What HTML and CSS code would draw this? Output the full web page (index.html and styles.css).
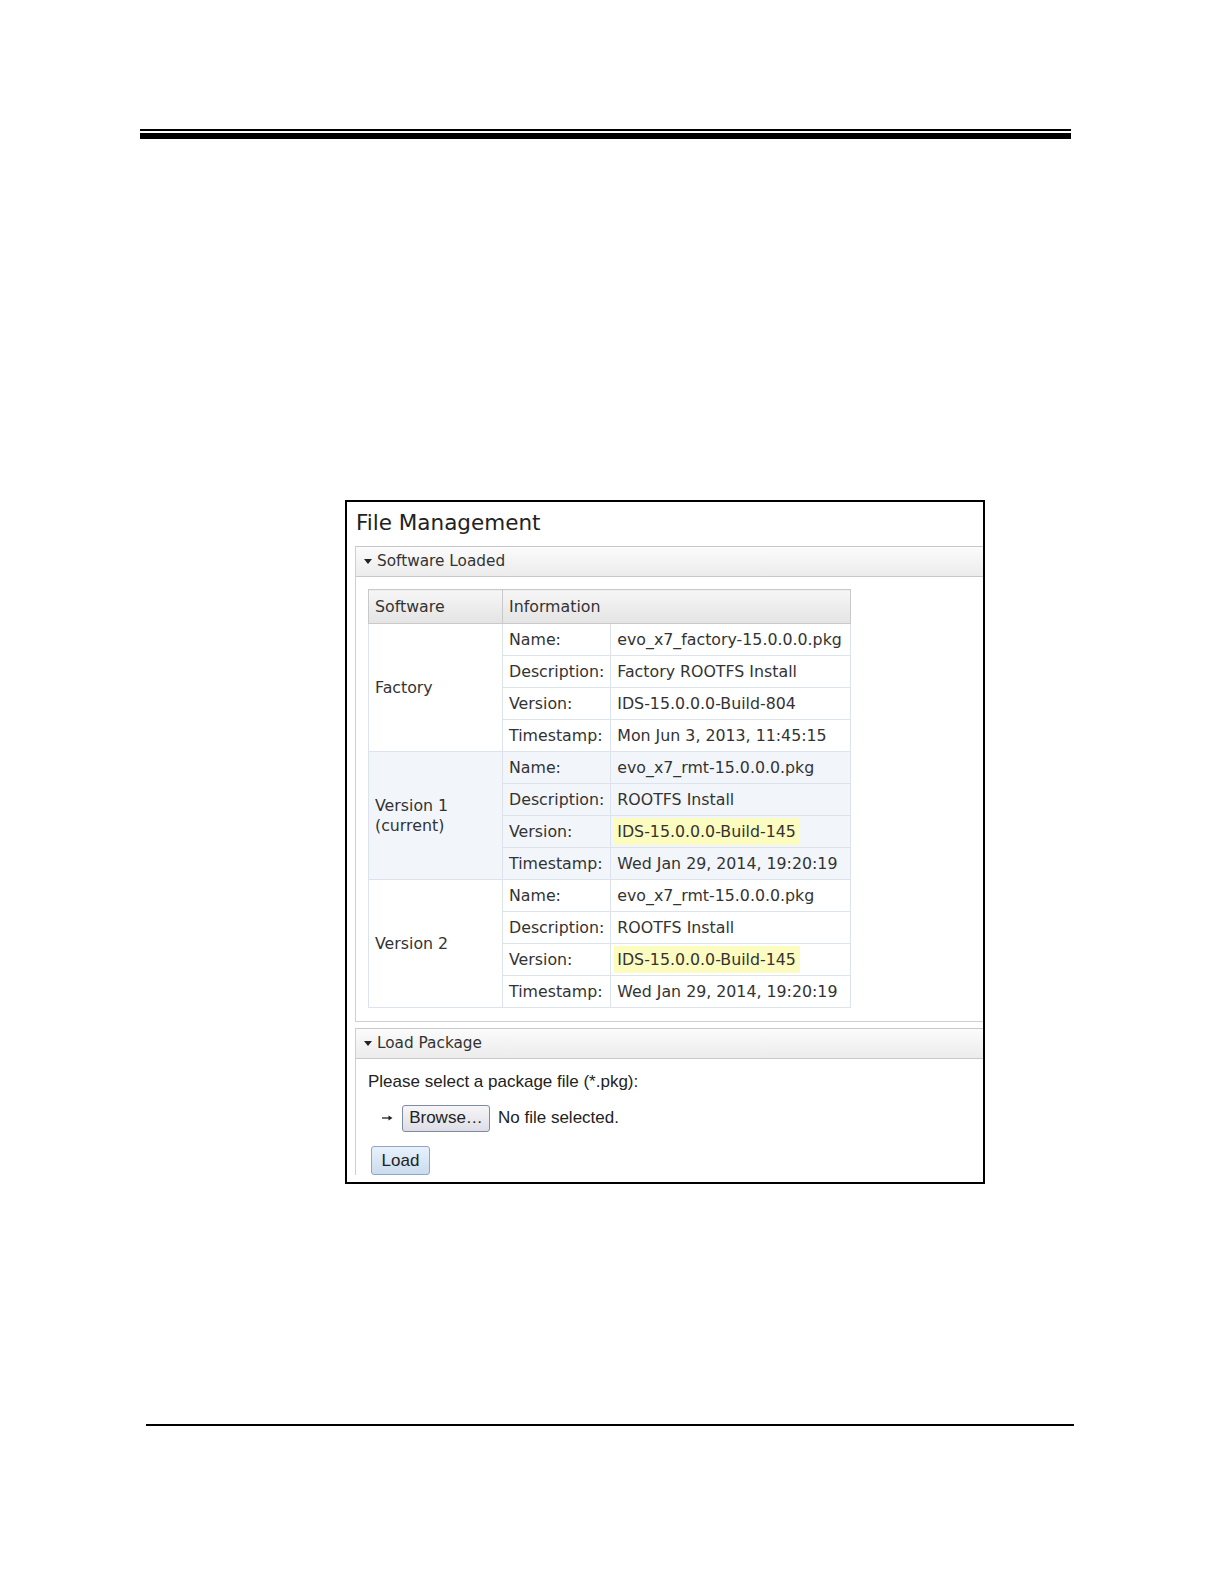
FILE: index.html
```html
<!DOCTYPE html>
<html>
<head>
<meta charset="utf-8">
<link rel="stylesheet" href="styles.css">
</head>
<body>
<div class="page">
  <div class="top-rule"><div class="thin"></div><div class="thick"></div></div>

  <div class="shot">
    <h1 class="title">File Management</h1>

    <div class="section">
      <div class="sec-head"><span class="tri"></span>Software Loaded</div>
      <div class="sec-body">
        <table class="sw">
          <thead>
            <tr><th class="c1">Software</th><th colspan="2">Information</th></tr>
          </thead>
          <tbody class="grp">
            <tr><td class="c1" rowspan="4">Factory</td><td class="c2">Name:</td><td class="c3">evo_x7_factory-15.0.0.0.pkg</td></tr>
            <tr><td class="c2">Description:</td><td class="c3">Factory ROOTFS Install</td></tr>
            <tr><td class="c2">Version:</td><td class="c3">IDS-15.0.0.0-Build-804</td></tr>
            <tr><td class="c2">Timestamp:</td><td class="c3">Mon Jun 3, 2013, 11:45:15</td></tr>
          </tbody>
          <tbody class="grp current">
            <tr><td class="c1" rowspan="4">Version 1<br>(current)</td><td class="c2">Name:</td><td class="c3">evo_x7_rmt-15.0.0.0.pkg</td></tr>
            <tr><td class="c2">Description:</td><td class="c3">ROOTFS Install</td></tr>
            <tr><td class="c2">Version:</td><td class="c3"><span class="hl">IDS-15.0.0.0-Build-145</span></td></tr>
            <tr><td class="c2">Timestamp:</td><td class="c3">Wed Jan 29, 2014, 19:20:19</td></tr>
          </tbody>
          <tbody class="grp">
            <tr><td class="c1" rowspan="4">Version 2</td><td class="c2">Name:</td><td class="c3">evo_x7_rmt-15.0.0.0.pkg</td></tr>
            <tr><td class="c2">Description:</td><td class="c3">ROOTFS Install</td></tr>
            <tr><td class="c2">Version:</td><td class="c3"><span class="hl">IDS-15.0.0.0-Build-145</span></td></tr>
            <tr><td class="c2">Timestamp:</td><td class="c3">Wed Jan 29, 2014, 19:20:19</td></tr>
          </tbody>
        </table>
      </div>
    </div>

    <div class="section second">
      <div class="sec-head"><span class="tri"></span>Load Package</div>
      <div class="load-body">
        <div class="prompt">Please select a package file (*.pkg):</div>
        <div class="file-row">
          <svg class="arrow" width="11" height="8" viewBox="0 0 11 8"><path d="M0 4H8" stroke="#222" stroke-width="1.3"/><path d="M6.5 1.5L10.5 4L6.5 6.5Z" fill="#222"/></svg>
          <span class="btn browse">Browse…</span>
          <span class="nofile">No file selected.</span>
        </div>
        <div class="load-row"><span class="btn load">Load</span></div>
      </div>
    </div>
  </div>

  <div class="bottom-rule"></div>
</div>
</body>
</html>
```

FILE: styles.css
```css
html, body {
  margin: 0;
  padding: 0;
  background: #ffffff;
}

.page {
  padding-top: 129px;
  display: flex;
  flex-direction: column;
}

.top-rule {
  margin-left: 140px;
  width: 931px;
  display: flex;
  flex-direction: column;
  gap: 2px;
}
.top-rule .thin { height: 2px; background: #000; }
.top-rule .thick { height: 6px; background: #000; }

.shot {
  margin-top: 361px;
  margin-left: 345px;
  width: 640px;
  height: 684px;
  box-sizing: border-box;
  border: 2px solid #000;
  padding: 0 0 0 8px;
  overflow: hidden;
  font-family: "DejaVu Sans", Verdana, sans-serif;
  color: #333;
}

.title {
  margin: 0;
  height: 44px;
  line-height: 42px;
  font-size: 21.5px;
  font-weight: normal;
  color: #222;
  padding-left: 1px;
}

.section {
  border-left: 1px solid #cfcfcf;
  border-bottom: 1px solid #cfcfcf;
}
.section.second {
  margin-top: 6px;
  border-bottom: none;
}

.sec-head {
  height: 29px;
  line-height: 29px;
  border-top: 1px solid #c8c8c8;
  border-bottom: 1px solid #c8c8c8;
  background: linear-gradient(#fbfbfb, #ececec);
  font-size: 15.3px;
  color: #333;
  padding-left: 8px;
  display: flex;
  align-items: center;
}

.tri {
  width: 0;
  height: 0;
  border-left: 4px solid transparent;
  border-right: 4px solid transparent;
  border-top: 5px solid #222;
  margin-right: 5px;
}

.sec-body {
  padding: 12px 0 13px 12px;
}

.sw {
  border-collapse: collapse;
  font-size: 15.8px;
  color: #333;
  border: 1px solid #d3d7df;
}
.sw th {
  height: 34px;
  box-sizing: border-box;
  text-align: left;
  font-weight: normal;
  padding: 0 6px;
  background: linear-gradient(#f6f6f6, #e4e4e4);
  border: 1px solid #c9c9c9;
}
.sw td {
  height: 32px;
  box-sizing: border-box;
  padding: 0 6px;
  border: 1px solid #dde3ec;
  white-space: nowrap;
}
.sw .c1 { width: 134px; }
.sw .c2 { width: 107px; }
.sw .c3 { width: 240px; }
.sw td.c1 { line-height: 20px; }

.current td { background: #f2f6fb; }

.hl {
  background: #fcfcc0;
  padding: 4px 4px 4px 3px;
  margin-left: -3px;
}

.load-body {
  padding: 12px 0 0 12px;
  font-family: "Liberation Sans", Arial, sans-serif;
  font-size: 17px;
  color: #222;
}
.prompt {
  height: 22px;
  line-height: 22px;
}
.file-row {
  margin-top: 11px;
  display: flex;
  align-items: center;
  height: 28px;
  padding-left: 14px;
}
.arrow {
  margin-right: 9px;
}
.btn {
  display: inline-flex;
  align-items: center;
  justify-content: center;
  box-sizing: border-box;
  border: 1px solid #7d8aa0;
  border-radius: 3px;
}
.browse {
  width: 88px;
  height: 27px;
  background: linear-gradient(#f6f6f8, #dedde6);
  color: #222;
}
.nofile {
  margin-left: 8px;
}
.load-row {
  margin-top: 14px;
  padding-left: 3px;
}
.load {
  width: 59px;
  height: 29px;
  background: linear-gradient(#e8f1fa, #cadcf0);
  border-color: #8ea6c4;
  color: #222;
}

.bottom-rule {
  margin-top: 240px;
  margin-left: 146px;
  width: 928px;
  height: 2px;
  background: #000;
}
```
